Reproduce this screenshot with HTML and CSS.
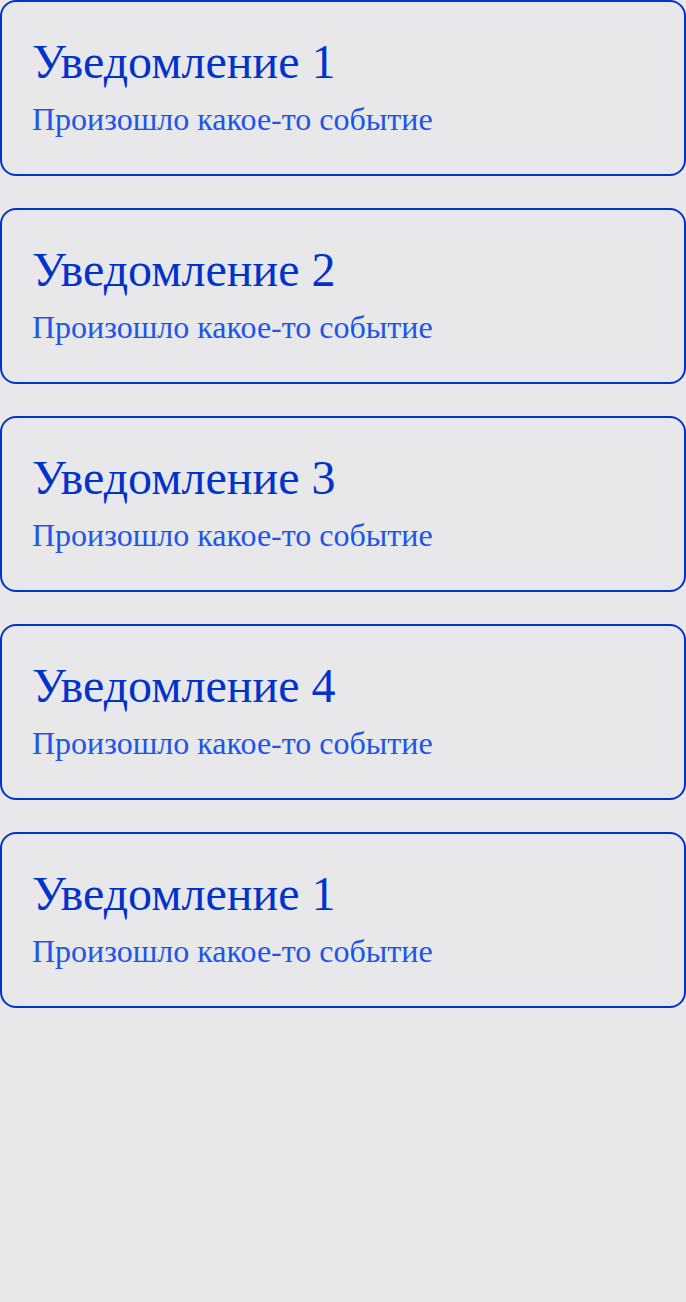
FILE: index.html
```html
<!DOCTYPE html>
<html lang="ru">
<head>
<meta charset="utf-8">
<link rel="stylesheet" href="styles.css">
</head>
<body>
<div class="list">
  <div class="card"><div class="title">Уведомление 1</div><div class="text">Произошло какое-то событие</div></div>
  <div class="card"><div class="title">Уведомление 2</div><div class="text">Произошло какое-то событие</div></div>
  <div class="card"><div class="title">Уведомление 3</div><div class="text">Произошло какое-то событие</div></div>
  <div class="card"><div class="title">Уведомление 4</div><div class="text">Произошло какое-то событие</div></div>
  <div class="card"><div class="title">Уведомление 1</div><div class="text">Произошло какое-то событие</div></div>
</div>
</body>
</html>
```
FILE: styles.css
```css
html, body {
  margin: 0;
  padding: 0;
  background: #e8e8eb;
  font-family: "Liberation Serif", "Times New Roman", serif;
}
.list {
  display: flex;
  flex-direction: column;
  gap: 32px;
}
.card {
  box-sizing: border-box;
  height: 176px;
  border: 2px solid #0033cc;
  border-radius: 16px;
  padding: 33px 30px 0;
  display: flex;
  flex-direction: column;
  gap: 13px;
}
.title {
  font-size: 48px;
  line-height: 53px;
  color: #0033cc;
}
.text {
  font-size: 32px;
  line-height: 36px;
  color: #1a56e8;
}
```
